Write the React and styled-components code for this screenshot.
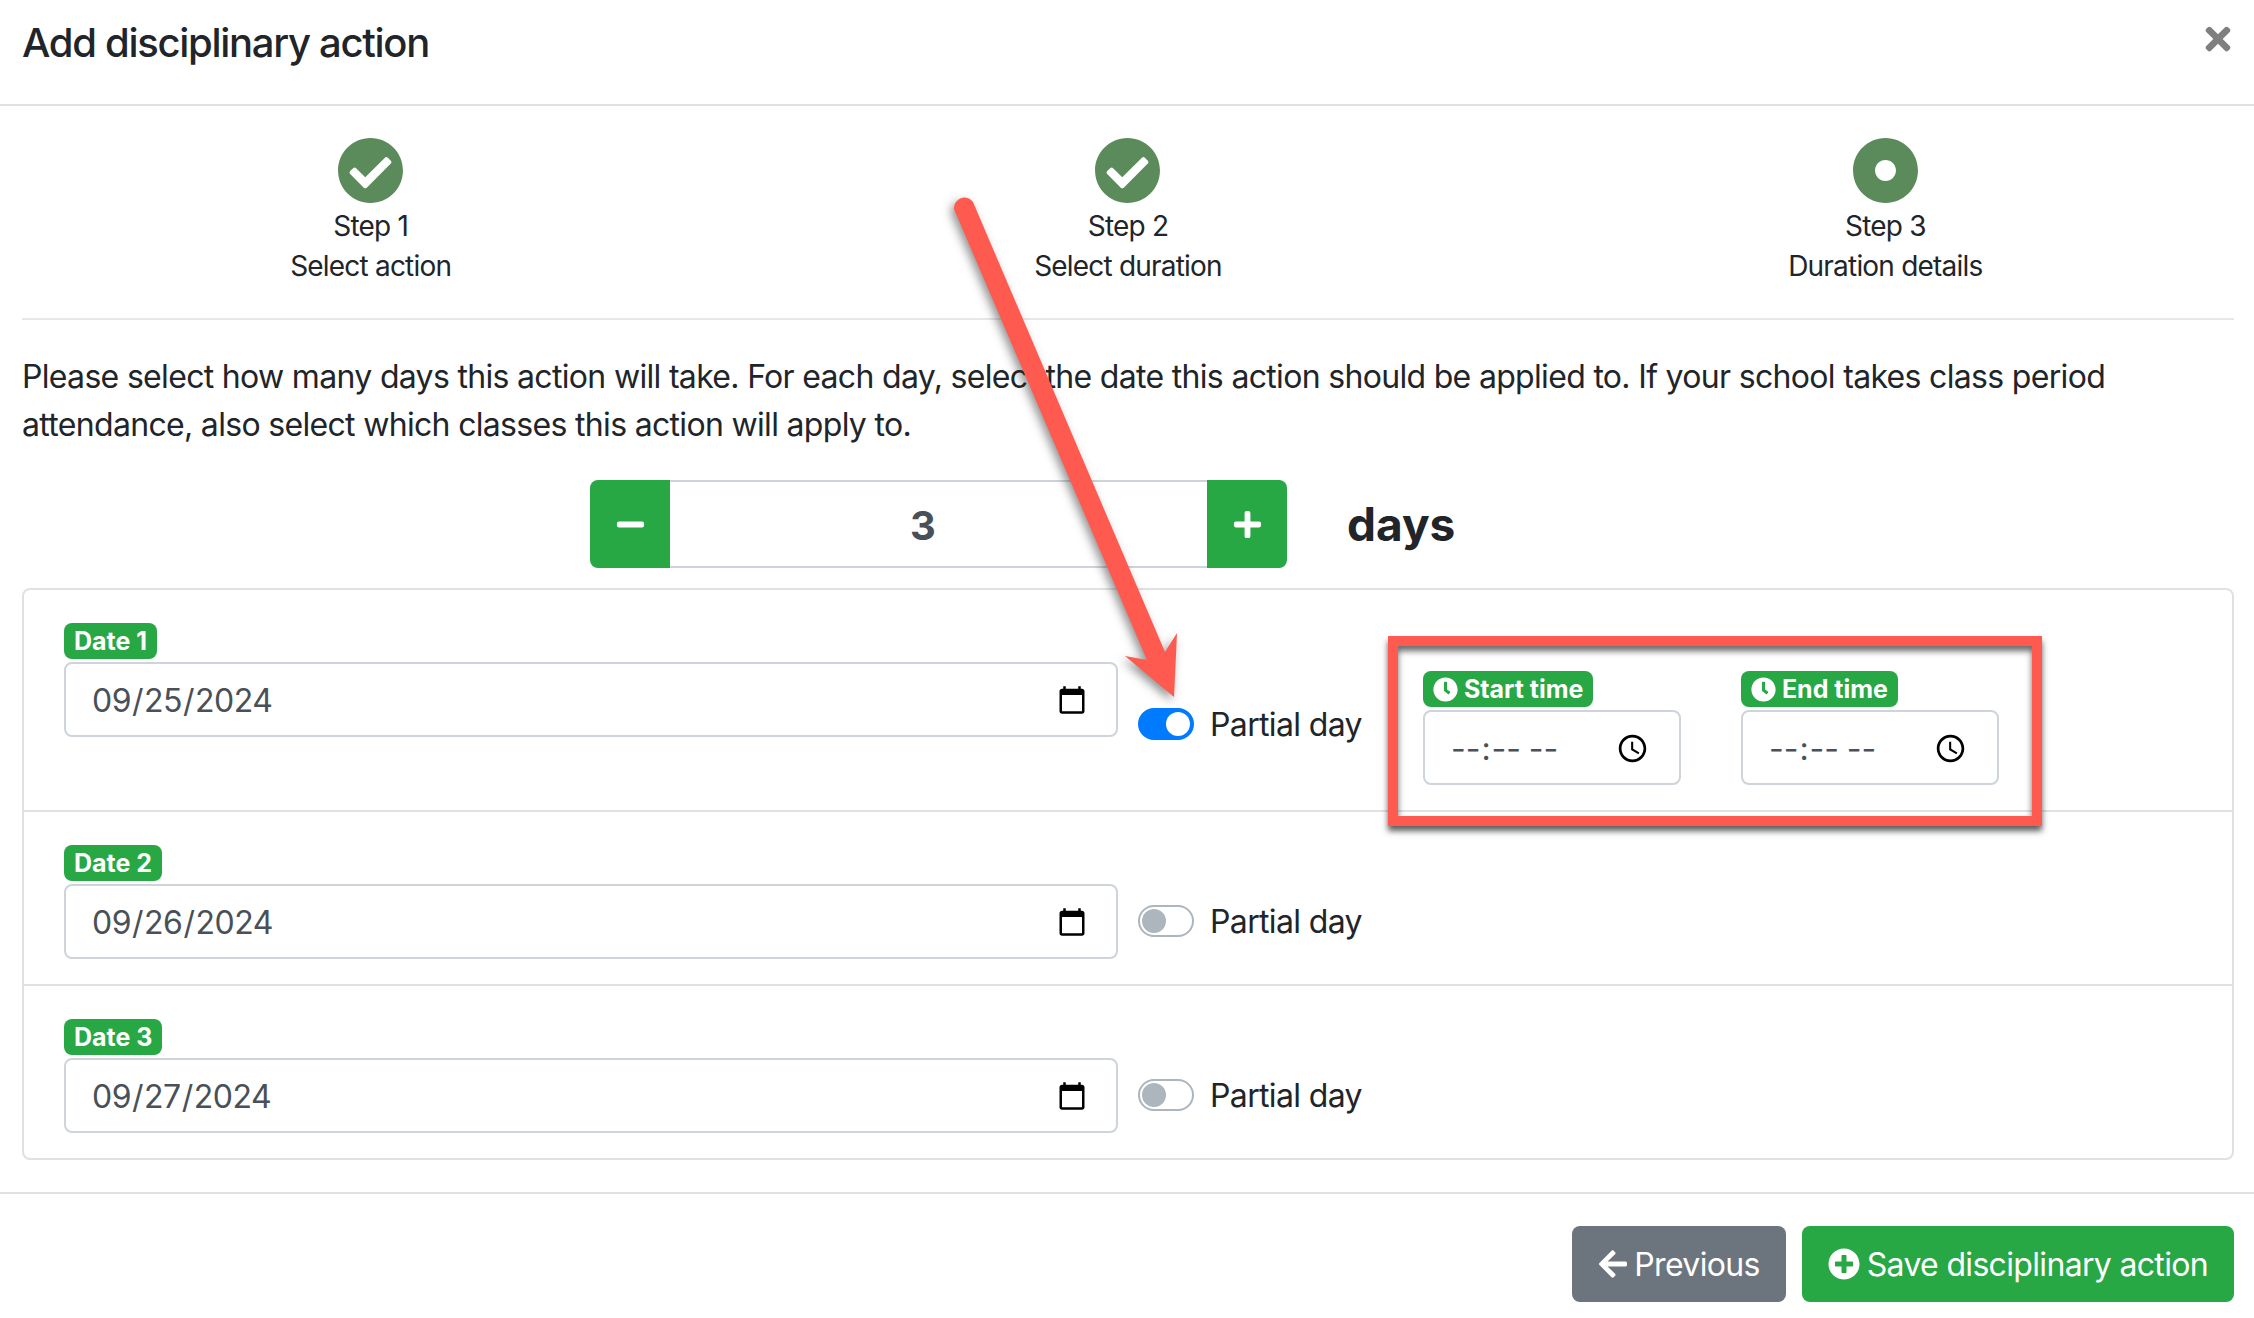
import React from "react";
import styled, { createGlobalStyle } from "styled-components";
import { FaCheckCircle, FaDotCircle, FaClock, FaArrowLeft, FaPlusCircle, FaMinus, FaPlus, FaTimes } from "react-icons/fa";

const Global = createGlobalStyle`
  html, body { margin: 0; padding: 0; background: #fff; overflow: hidden; }
  * { box-sizing: border-box; }
  body { font-family: Inter, "Liberation Sans", sans-serif; color: #212529; font-size: 32px; }
`;
const Page = styled.div`position: relative; width: 2254px; height: 1318px; overflow: hidden; background: #fff;`;
const Header = styled.header`
  height: 106px; border-bottom: 2px solid #dee2e6; padding: 0 20px 0 22px; display: flex; align-items: flex-start; justify-content: space-between;
`;
const Title = styled.h5`margin: 19px 0 0; font-size: 40px; line-height: 48px; font-weight: 500; letter-spacing: -1.3px; color: #212529;`;
const Close = styled.button`
  border: 0; background: none; padding: 0; margin: 21px -2px 0 0; color: #7f7f7f; font-size: 36px; line-height: 1; display: flex;
`;
const Body = styled.main`padding: 0 20px 0 22px;`;
const Steps = styled.div`
  display: grid; grid-template-columns: repeat(3, 1fr); margin: 0 -30px; padding: 31px 0 32px;
`;
const Divider = styled.hr`margin: 0; border: 0; border-top: 2px solid #e5e7e9;`;
const Step = styled.div`display: flex; flex-direction: column; align-items: center; font-size: 28px; letter-spacing: -0.8px; line-height: 40px; color: #212529;`;
const StepIcon = styled.span`display: flex; color: #5b8a5b; font-size: 67px; margin-bottom: 2px;`;
const Intro = styled.p`margin: 33px 0 31px; font-size: 32px; line-height: 48px; letter-spacing: -0.68px; color: #212529;`;
const CounterRow = styled.div`display: flex; align-items: center; padding-left: 568px; margin-bottom: 20px;`;
const CountButton = styled.button`
  width: 80px; height: 88px; border: 0; padding: 0; background: #28a745; color: #fff; display: flex; align-items: center; justify-content: center;
  font-size: 31px; border-radius: ${p => (p.$side === "left" ? "8px 0 0 8px" : "0 8px 8px 0")};
`;
const CountInput = styled.input`
  width: 537px; height: 88px; border: solid #ced4da; border-width: 2px 0; text-align: center; font: 700 40px Inter, sans-serif; color: #495057; outline: none;
  padding: 2px 31px 0 0;
`;
const Days = styled.span`margin-left: 60px; font-size: 46px; font-weight: 700; color: #212529;`;
const Card = styled.section`border: 2px solid #dfe1e3; border-radius: 8px;`;
const Row = styled.div`
  display: flex; align-items: flex-start; padding: 33px 0 25px 40px;
  border-top: ${p => (p.$first ? "0" : "2px solid #dfe1e3")};
`;
const Field = styled.div`display: flex; flex-direction: column; align-items: flex-start; gap: 3px;`;
const Badge = styled.span`
  display: inline-flex; align-items: center; gap: 6px; height: 36px; padding: 0 10px; background: #28a745; color: #fff; border-radius: 8px; font-size: 25px; font-weight: 700; line-height: 1;
`;
const NativeInput = styled.input`
  width: ${p => p.$w}px; height: 75px; border: 2px solid #ced4da; border-radius: 8px; padding: 2px 26px 0 25px; color: #495057; background: #fff; font: 400 32px Inter, sans-serif; outline: none;
  letter-spacing: ${p => p.$track}px;
`;
const Partial = styled.div`display: flex; align-items: center; gap: 16px; height: 48px; margin: ${p => p.$top}px 0 0 20px;`;
const Toggle = styled.span`
  position: relative; width: 56px; height: 32px; border-radius: 16px; border: 2px solid ${p => (p.$on ? "#007bff" : "#adb5bd")}; background: ${p => (p.$on ? "#007bff" : "#fff")}; display: block;
  &::after { content: ""; position: absolute; top: 2px; left: ${p => (p.$on ? "26px" : "2px")}; width: 24px; height: 24px; border-radius: 50%; background: ${p => (p.$on ? "#fff" : "#adb5bd")}; }
`;
const PartialText = styled.span`font-size: 32px; letter-spacing: -0.64px; color: #212529;`;
const Times = styled.div`display: flex; gap: 60px; margin: 48px 0 0 61px;`;
const Footer = styled.footer`
  margin-top: 32px; border-top: 2px solid #dee2e6; padding: 32px 20px 0 0; display: flex; justify-content: flex-end; gap: 16px;
`;
const Action = styled.button`
  height: 76px; border: 0; border-radius: 8px; padding: 0 26px 0 ${p => p.$left}px; color: #fff; background: ${p => p.$bg}; display: flex; align-items: center; gap: ${p => p.$gap}px; font: 400 32px Inter, sans-serif; letter-spacing: -0.67px;
`;
const RedBox = styled.div`
  position: absolute; left: 1388px; top: 636px; width: 654px; height: 190px; border: 10px solid #ff5a4f;
  box-shadow: 0 5px 6px rgba(40,40,40,.75), inset 0 5px 6px rgba(40,40,40,.7);
`;
const Arrow = styled.svg`position: absolute; left: 0; top: 0; pointer-events: none; filter: drop-shadow(-3px 4px 5px rgba(40,40,40,.5));`;

const dates = [
  { n: 1, v: "2024-09-25", on: true },
  { n: 2, v: "2024-09-26" },
  { n: 3, v: "2024-09-27" },
];
const noop = () => {};

export default function App() {
  return (
    <Page>
      <Global />
      <Header>
        <Title>Add disciplinary action</Title>
        <Close aria-label="Close"><FaTimes /></Close>
      </Header>
      <Body>
        <Steps>
          <Step><StepIcon><FaCheckCircle /></StepIcon><span>Step 1</span><span>Select action</span></Step>
          <Step><StepIcon><FaCheckCircle /></StepIcon><span>Step 2</span><span>Select duration</span></Step>
          <Step><StepIcon><FaDotCircle /></StepIcon><span>Step 3</span><span>Duration details</span></Step>
        </Steps>
        <Divider />
        <Intro>Please select how many days this action will take. For each day, select the date this action should be applied to. If your school takes class period attendance, also select which classes this action will apply to.</Intro>
        <CounterRow>
          <CountButton $side="left"><FaMinus /></CountButton>
          <CountInput value="3" onChange={noop} />
          <CountButton $side="right"><FaPlus /></CountButton>
          <Days>days</Days>
        </CounterRow>
        <Card>
          {dates.map((d, i) => (
            <Row key={d.n} $first={i === 0}>
              <Field>
                <Badge>Date {d.n}</Badge>
                <NativeInput type="date" $w={1054} $track={-0.5} value={d.v} onChange={noop} />
              </Field>
              <Partial $top={d.on ? 77 : 52}>
                <Toggle $on={d.on} />
                <PartialText>Partial day</PartialText>
              </Partial>
              {d.on && (
                <Times>
                  <Field>
                    <Badge><FaClock />Start time</Badge>
                    <NativeInput type="time" $w={258} $track={2.1} />
                  </Field>
                  <Field>
                    <Badge><FaClock />End time</Badge>
                    <NativeInput type="time" $w={258} $track={2.1} />
                  </Field>
                </Times>
              )}
            </Row>
          ))}
        </Card>
      </Body>
      <Footer>
        <Action $bg="#6c757d" $left={25} $gap={5}><FaArrowLeft />Previous</Action>
        <Action $bg="#28a745" $left={26} $gap={7}><FaPlusCircle />Save disciplinary action</Action>
      </Footer>
      <RedBox />
      <Arrow width="2254" height="1318" viewBox="0 0 2254 1318">
        <path d="M954 209 A10.5 10.5 0 0 1 973 202 L1165 652 L1177 633 L1174 697 L1125 656 L1147 660 Z" fill="#ff5a4f" />
      </Arrow>
    </Page>
  );
}
